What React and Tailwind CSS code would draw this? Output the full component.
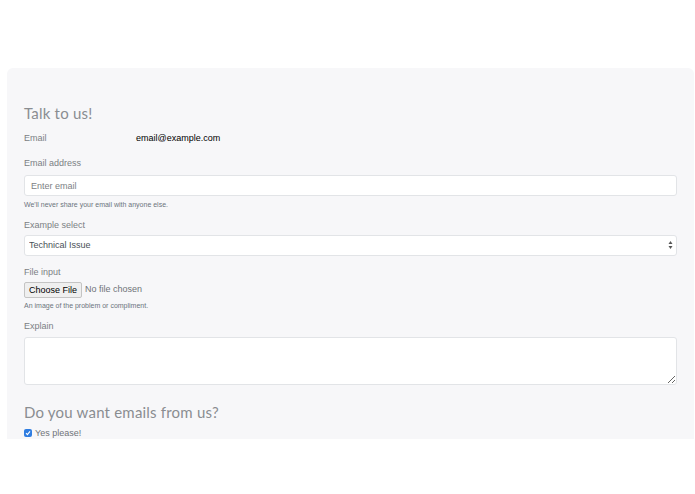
export default function App() {
    const label = 'block text-[9px] leading-[12px] text-[#7b7f84]';
    const help = 'mt-[4px] text-[7px] leading-[9px] text-[#6c757d]';
    const heading = "text-[15px] leading-[18px] text-[#8a8d91] tracking-[0.2px]";

    return (
        <div className="min-h-screen bg-white pt-[68px] pl-[7px] pr-[1px]" style={{ fontFamily: '"Liberation Sans", Arial, sans-serif' }}>
            <div className="h-[371px] rounded-t-md bg-[#f7f7f9] px-[17px] pt-[36px]">
                <h2 className={heading} style={{ fontFamily: 'Lato, sans-serif' }}>Talk to us!</h2>

                <div className="mt-[10px] flex items-center">
                    <span className="w-[112px] text-[9px] leading-[12px] text-[#7b7f84]">Email</span>
                    <span className="text-[9px] leading-[12px] text-black">email@example.com</span>
                </div>

                <div className="mt-[13px]">
                    <label className={label}>Email address</label>
                    <input
                        type="email"
                        placeholder="Enter email"
                        className="mt-[6px] block h-[21px] w-full rounded-[3px] border border-[#e2e4e7] bg-white px-[6px] text-[9px] text-[#495057] placeholder:text-[#7d8185] outline-none"
                    />
                    <p className={help}>We'll never share your email with anyone else.</p>
                </div>

                <div className="mt-[10px]">
                    <label className={label}>Example select</label>
                    <div className="relative mt-[4px]">
                        <select className="block h-[21px] w-full appearance-none rounded-[3px] border border-[#e2e4e7] bg-white px-[4px] text-[9px] text-[#495057] outline-none">
                            <option>Technical Issue</option>
                            <option>Compliment</option>
                            <option>Other</option>
                        </select>
                        <svg className="pointer-events-none absolute right-[4px] top-[5px]" width="5" height="10" viewBox="0 0 5 10">
                            <path d="M2.5 1 L4.5 4 L0.5 4 Z" fill="#555" />
                            <path d="M2.5 9 L4.5 6 L0.5 6 Z" fill="#555" />
                        </svg>
                    </div>
                </div>

                <div className="mt-[10px]">
                    <label className={label}>File input</label>
                    <div className="mt-[4px] flex items-center gap-[3px]">
                        <button className="h-[16px] rounded-[2px] border border-[#c4c4c4] bg-[#efefef] px-[4px] text-[9px] leading-[14px] text-black">Choose File</button>
                        <span className="text-[9px] text-[#6f7378]">No file chosen</span>
                    </div>
                    <p className="mt-[3px] text-[7px] leading-[9px] text-[#6c757d]">An image of the problem or compliment.</p>
                </div>

                <div className="mt-[10px]">
                    <label className={label}>Explain</label>
                    <textarea className="mt-[5px] block h-[48px] w-full resize-y rounded-[3px] border border-[#e2e4e7] bg-white outline-none" />
                </div>

                <h2 className={`mt-[18px] ${heading}`} style={{ fontFamily: 'Lato, sans-serif' }}>Do you want emails from us?</h2>

                <label className="mt-[6px] flex items-center gap-[3px]">
                    <span className="flex h-[8px] w-[8px] items-center justify-center rounded-[2px] bg-[#2f7de1]">
                        <svg width="6" height="6" viewBox="0 0 6 6">
                            <path d="M1 3.2 L2.4 4.6 L5 1.4" fill="none" stroke="white" strokeWidth="1.1" />
                        </svg>
                    </span>
                    <span className="text-[9px] leading-[12px] text-[#6f7378]">Yes please!</span>
                </label>
            </div>
        </div>
    );
}
